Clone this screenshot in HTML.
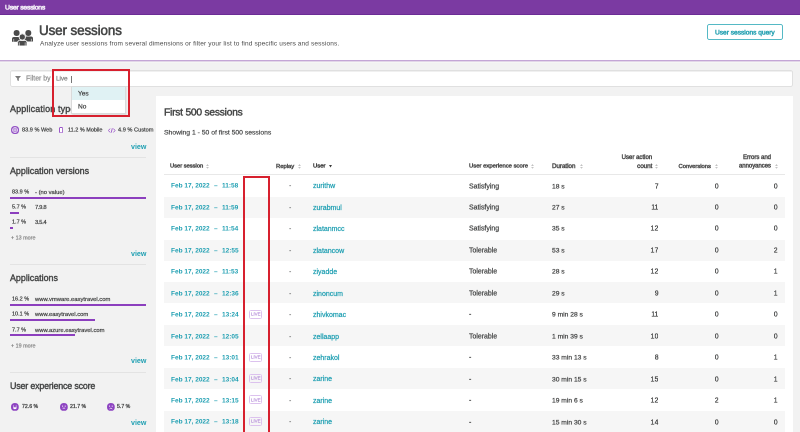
<!DOCTYPE html>
<html><head><meta charset="utf-8">
<style>
*{margin:0;padding:0;box-sizing:border-box}
html,body{width:800px;height:432px;overflow:hidden;background:#f2f2f2;font-family:"Liberation Sans",sans-serif;color:#454646}
.a{position:absolute;white-space:nowrap;line-height:1;will-change:transform}
</style></head><body>
<div class="a" style="left:0;top:0;width:800px;height:15px;background:#7b3aa2"></div>
<div class="a" style="left:0;top:14px;width:800px;height:1px;background:#6b2c95"></div>
<div class="a" style="left:4.90px;top:4.37px;font-size:13.600px;transform:scale(0.5);transform-origin:0 0;color:#f4eef8;letter-spacing:-0.400px;-webkit-text-stroke:1.200px #f4eef8;">User sessions</div>
<div class="a" style="left:0;top:15px;width:800px;height:45px;background:#fff"></div>
<div class="a" style="left:0;top:60px;width:800px;height:1px;background:#c4a6d6"></div>
<div class="a" style="left:0;top:61px;width:800px;height:1px;background:#e2d6e8"></div>
<div class="a" style="left:0;top:62px;width:800px;height:1px;background:#f5f6f4"></div>
<svg class="a" style="left:9px;top:27px" width="28" height="22" viewBox="0 0 28 22">
 <g fill="#4a4a4a">
  <circle cx="7.6" cy="6.1" r="3.0"/><circle cx="19.3" cy="5.9" r="3.0"/>
  <path d="M3 14.8V11.6Q3 9.9 4.7 9.9H10.5Q11.8 9.9 11.8 11.6V14.8Z"/>
  <path d="M15.2 14.5V11.2Q15.2 9.5 16.8 9.5H22.3Q24 9.5 24 11.2V14.5Z"/>
  <circle cx="13.3" cy="10" r="3.2" stroke="#fff" stroke-width="0.9"/>
  <path d="M8.6 19V15.3Q8.6 13.4 10.5 13.4H16.1Q18 13.4 18 15.3V19Z" stroke="#fff" stroke-width="0.9"/>
 </g>
 <g stroke="#fff" stroke-width="0.55"><path d="M4.7 12V14.8M22.4 11.8V14.5M10.4 15.4V19M16.2 15.4V19"/></g>
</svg>
<div class="a" style="left:38.75px;top:24.02px;font-size:26.800px;transform:scale(0.5);transform-origin:0 0;color:#454646;letter-spacing:-0.200px;-webkit-text-stroke:1.120px #454646;">User sessions</div>
<div class="a" style="left:39.75px;top:40.36px;font-size:13.000px;transform:scale(0.5);transform-origin:0 0;color:#4a4a4a;letter-spacing:0.280px;">Analyze user sessions from several dimensions or filter your list to find specific users and sessions.</div>
<div class="a" style="left:707px;top:24px;width:76px;height:16px;border:1px solid #55b9c5;border-radius:2px"></div>
<div class="a" style="left:715.20px;top:28.56px;font-size:13.200px;transform:scale(0.5);transform-origin:0 0;color:#2aa3b3;-webkit-text-stroke:1.000px #2aa3b3;">User sessions query</div>
<div class="a" style="left:10px;top:70px;width:782.5px;height:17px;background:#fff;border:1px solid #e0e0e0;border-radius:2px;box-shadow:inset 0 1px 0 #f0f0f0"></div>
<svg class="a" style="left:14.8px;top:75.9px" width="6" height="5" viewBox="0 0 6 5"><path d="M0 0H6L3.8 2.4V5L2.2 4.2V2.4Z" fill="#7a7a7a"/></svg>
<div class="a" style="left:26.00px;top:74.97px;font-size:13.800px;transform:scale(0.5);transform-origin:0 0;color:#909090;-webkit-text-stroke:0.480px #909090;">Filter by</div>
<div class="a" style="left:55.50px;top:74.96px;font-size:13.000px;transform:scale(0.5);transform-origin:0 0;color:#858585;letter-spacing:-0.200px;-webkit-text-stroke:0.480px #858585;">Live</div>
<div class="a" style="left:71px;top:75.7px;width:0.8px;height:7px;background:#777"></div>
<div class="a" style="left:10.40px;top:105.18px;font-size:17.900px;transform:scale(0.5);transform-origin:0 0;color:#454646;letter-spacing:0.300px;-webkit-text-stroke:0.800px #454646;">Application types</div>
<svg class="a" style="left:11px;top:126.1px" width="8.1" height="8.1" viewBox="0 0 8 8"><circle cx="4" cy="4" r="4" fill="#9250c4"/><g stroke="#fff" stroke-width="0.7" fill="none"><circle cx="4" cy="4" r="2.5"/><path d="M4 1.5V6.5M1.5 4H6.5"/></g></svg>
<div class="a" style="left:21.90px;top:127.23px;font-size:11.200px;transform:scale(0.5);transform-origin:0 0;color:#454646;-webkit-text-stroke:0.480px #454646;">83.9 % Web</div>
<svg class="a" style="left:59px;top:126.9px" width="4.2" height="6.4" viewBox="0 0 4.2 6.4"><rect x="0.5" y="0.5" width="3.2" height="5.4" rx="0.5" fill="#fff" stroke="#9a55c8" stroke-width="1"/></svg>
<div class="a" style="left:68.00px;top:127.23px;font-size:11.000px;transform:scale(0.5);transform-origin:0 0;color:#454646;-webkit-text-stroke:0.480px #454646;">11.2 % Mobile</div>
<svg class="a" style="left:107.6px;top:127.5px" width="7.5" height="5" viewBox="0 0 7.5 5"><g stroke="#9a55c8" stroke-width="0.9" fill="none"><path d="M2 0.6L0.5 2.5L2 4.4M5.5 0.6L7 2.5L5.5 4.4M4.3 0.3L3.2 4.7"/></g></svg>
<div class="a" style="left:118.40px;top:127.23px;font-size:11.300px;transform:scale(0.5);transform-origin:0 0;color:#454646;-webkit-text-stroke:0.480px #454646;">4.9 % Custom</div>
<div class="a" style="left:130.80px;top:142.50px;font-size:14.200px;transform:scale(0.5);transform-origin:0 0;color:#1f9fb2;font-weight:bold;">view</div>
<div class="a" style="left:10px;top:157.2px;width:136.4px;height:1px;background:#e3e3e3"></div>
<div class="a" style="left:10.40px;top:167.19px;font-size:17.800px;transform:scale(0.5);transform-origin:0 0;color:#454646;-webkit-text-stroke:0.800px #454646;">Application versions</div>
<div class="a" style="left:11.90px;top:189.28px;font-size:11.000px;transform:scale(0.5);transform-origin:0 0;color:#454646;-webkit-text-stroke:0.480px #454646;">83.9 %</div>
<div class="a" style="left:34.60px;top:189.05px;font-size:11.700px;transform:scale(0.5);transform-origin:0 0;color:#454646;-webkit-text-stroke:0.480px #454646;">- (no value)</div>
<div class="a" style="left:10px;top:196.6px;width:136.4px;height:1.9px;background:#8c3fbe"></div>
<div class="a" style="left:11.90px;top:204.28px;font-size:11.000px;transform:scale(0.5);transform-origin:0 0;color:#454646;-webkit-text-stroke:0.480px #454646;">5.7 %</div>
<div class="a" style="left:34.60px;top:204.05px;font-size:11.700px;transform:scale(0.5);transform-origin:0 0;color:#454646;letter-spacing:-0.700px;-webkit-text-stroke:0.480px #454646;">7.9.8</div>
<div class="a" style="left:10px;top:211.9px;width:9.4px;height:1.9px;background:#8c3fbe"></div>
<div class="a" style="left:11.90px;top:219.48px;font-size:11.000px;transform:scale(0.5);transform-origin:0 0;color:#454646;-webkit-text-stroke:0.480px #454646;">1.7 %</div>
<div class="a" style="left:34.60px;top:219.25px;font-size:11.700px;transform:scale(0.5);transform-origin:0 0;color:#454646;letter-spacing:-0.700px;-webkit-text-stroke:0.480px #454646;">3.5.4</div>
<div class="a" style="left:10px;top:226.9px;width:3.1px;height:1.9px;background:#8c3fbe"></div>
<div class="a" style="left:11.00px;top:234.98px;font-size:10.800px;transform:scale(0.5);transform-origin:0 0;color:#808080;-webkit-text-stroke:0.400px #808080;">+ 13 more</div>
<div class="a" style="left:130.80px;top:249.50px;font-size:14.200px;transform:scale(0.5);transform-origin:0 0;color:#1f9fb2;font-weight:bold;">view</div>
<div class="a" style="left:10px;top:264.4px;width:136.4px;height:1px;background:#e3e3e3"></div>
<div class="a" style="left:10.40px;top:274.19px;font-size:17.800px;transform:scale(0.5);transform-origin:0 0;color:#454646;-webkit-text-stroke:0.800px #454646;">Applications</div>
<div class="a" style="left:11.90px;top:296.18px;font-size:11.000px;transform:scale(0.5);transform-origin:0 0;color:#454646;-webkit-text-stroke:0.480px #454646;">16.2 %</div>
<div class="a" style="left:34.60px;top:295.95px;font-size:11.700px;transform:scale(0.5);transform-origin:0 0;color:#454646;-webkit-text-stroke:0.480px #454646;">www.vmware.easytravel.com</div>
<div class="a" style="left:10px;top:303.5px;width:136.4px;height:1.9px;background:#8c3fbe"></div>
<div class="a" style="left:11.90px;top:311.38px;font-size:11.000px;transform:scale(0.5);transform-origin:0 0;color:#454646;-webkit-text-stroke:0.480px #454646;">10.1 %</div>
<div class="a" style="left:34.60px;top:311.15px;font-size:11.700px;transform:scale(0.5);transform-origin:0 0;color:#454646;-webkit-text-stroke:0.480px #454646;">www.easytravel.com</div>
<div class="a" style="left:10px;top:319.2px;width:84.7px;height:1.9px;background:#8c3fbe"></div>
<div class="a" style="left:11.90px;top:326.98px;font-size:11.000px;transform:scale(0.5);transform-origin:0 0;color:#454646;-webkit-text-stroke:0.480px #454646;">7.7 %</div>
<div class="a" style="left:34.60px;top:326.75px;font-size:11.700px;transform:scale(0.5);transform-origin:0 0;color:#454646;-webkit-text-stroke:0.480px #454646;">www.azure.easytravel.com</div>
<div class="a" style="left:10px;top:334px;width:65px;height:1.9px;background:#8c3fbe"></div>
<div class="a" style="left:11.00px;top:342.98px;font-size:10.800px;transform:scale(0.5);transform-origin:0 0;color:#808080;-webkit-text-stroke:0.400px #808080;">+ 19 more</div>
<div class="a" style="left:130.80px;top:357.00px;font-size:14.200px;transform:scale(0.5);transform-origin:0 0;color:#1f9fb2;font-weight:bold;">view</div>
<div class="a" style="left:10px;top:372.4px;width:136.4px;height:1px;background:#e3e3e3"></div>
<div class="a" style="left:10.40px;top:381.79px;font-size:17.800px;transform:scale(0.5);transform-origin:0 0;color:#454646;letter-spacing:-0.360px;-webkit-text-stroke:0.800px #454646;">User experience score</div>
<svg class="a" style="left:11.4px;top:402.8px" width="7.8" height="7.8" viewBox="0 0 7.8 7.8"><circle cx="3.9" cy="3.9" r="3.9" fill="#8e44c2"/><circle cx="2.6" cy="3" r="0.6" fill="#fff"/><circle cx="5.2" cy="3" r="0.6" fill="#fff"/><path d="M2 4.2H5.8Q5.8 6.3 3.9 6.3Q2 6.3 2 4.2Z" fill="#fff"/></svg>
<div class="a" style="left:22.00px;top:404.24px;font-size:10.400px;transform:scale(0.5);transform-origin:0 0;color:#454646;-webkit-text-stroke:0.600px #454646;">72.6 %</div>
<svg class="a" style="left:59.7px;top:402.8px" width="7.8" height="7.8" viewBox="0 0 7.8 7.8"><circle cx="3.9" cy="3.9" r="3.9" fill="#8e44c2"/><circle cx="2.6" cy="3.1" r="0.6" fill="#fff"/><circle cx="5.2" cy="3.1" r="0.6" fill="#fff"/><path d="M2.6 5.2H5.2" stroke="#fff" stroke-width="0.7"/></svg>
<div class="a" style="left:70.00px;top:404.24px;font-size:10.400px;transform:scale(0.5);transform-origin:0 0;color:#454646;-webkit-text-stroke:0.600px #454646;">21.7 %</div>
<svg class="a" style="left:106.6px;top:402.8px" width="7.8" height="7.8" viewBox="0 0 7.8 7.8"><circle cx="3.9" cy="3.9" r="3.9" fill="#8e44c2"/><circle cx="2.6" cy="3.1" r="0.6" fill="#fff"/><circle cx="5.2" cy="3.1" r="0.6" fill="#fff"/><path d="M2.5 5.9Q3.9 4.4 5.3 5.9" stroke="#fff" stroke-width="0.7" fill="none"/></svg>
<div class="a" style="left:116.80px;top:404.24px;font-size:10.400px;transform:scale(0.5);transform-origin:0 0;color:#454646;-webkit-text-stroke:0.600px #454646;">5.7 %</div>
<div class="a" style="left:130.80px;top:418.80px;font-size:14.200px;transform:scale(0.5);transform-origin:0 0;color:#1f9fb2;font-weight:bold;">view</div>
<div class="a" style="left:155.8px;top:96.2px;width:636.8px;height:340px;background:#fff"></div>
<div class="a" style="left:164.20px;top:106.96px;font-size:20.400px;transform:scale(0.5);transform-origin:0 0;color:#454646;letter-spacing:-0.400px;-webkit-text-stroke:0.880px #454646;">First 500 sessions</div>
<div class="a" style="left:164.20px;top:129.27px;font-size:13.600px;transform:scale(0.5);transform-origin:0 0;color:#454646;-webkit-text-stroke:0.400px #454646;">Showing 1 - 50 of first 500 sessions</div>
<div class="a" style="left:170.00px;top:163.48px;font-size:11.500px;transform:scale(0.5);transform-origin:0 0;color:#4f4f4f;-webkit-text-stroke:0.960px #4f4f4f;">User session</div>
<svg class="a" style="left:206.2px;top:163.7px" width="3" height="4.8" viewBox="0 0 3 4.8"><path d="M1.5 0L2.9 1.9H0.1Z M1.5 4.8L2.9 2.9H0.1Z" fill="#c2c2c2"/></svg>
<div class="a" style="left:276.20px;top:163.25px;font-size:11.700px;transform:scale(0.5);transform-origin:0 0;color:#4f4f4f;-webkit-text-stroke:0.960px #4f4f4f;">Replay</div>
<svg class="a" style="left:298.3px;top:163.7px" width="3" height="4.8" viewBox="0 0 3 4.8"><path d="M1.5 0L2.9 1.9H0.1Z M1.5 4.8L2.9 2.9H0.1Z" fill="#c2c2c2"/></svg>
<div class="a" style="left:313.00px;top:163.47px;font-size:11.800px;transform:scale(0.5);transform-origin:0 0;color:#3a3a3a;-webkit-text-stroke:0.880px #3a3a3a;">User</div>
<svg class="a" style="left:329.4px;top:164.6px" width="3" height="2.6" viewBox="0 0 3 2.6"><path d="M0 0H3L1.5 2.4Z" fill="#3a3a3a"/></svg>
<div class="a" style="left:468.75px;top:163.47px;font-size:11.800px;transform:scale(0.5);transform-origin:0 0;color:#4f4f4f;-webkit-text-stroke:0.960px #4f4f4f;">User experience score</div>
<svg class="a" style="left:530.9px;top:163.7px" width="3" height="4.8" viewBox="0 0 3 4.8"><path d="M1.5 0L2.9 1.9H0.1Z M1.5 4.8L2.9 2.9H0.1Z" fill="#c2c2c2"/></svg>
<div class="a" style="left:552.20px;top:163.21px;font-size:12.400px;transform:scale(0.5);transform-origin:0 0;color:#4f4f4f;-webkit-text-stroke:0.960px #4f4f4f;">Duration</div>
<svg class="a" style="left:579.9px;top:163.7px" width="3" height="4.8" viewBox="0 0 3 4.8"><path d="M1.5 0L2.9 1.9H0.1Z M1.5 4.8L2.9 2.9H0.1Z" fill="#c2c2c2"/></svg>
<div class="a" style="right:148.00px;top:153.73px;font-size:12.100px;transform:scale(0.5);transform-origin:100% 0;color:#4f4f4f;-webkit-text-stroke:0.960px #4f4f4f;">User action</div>
<div class="a" style="right:148.10px;top:163.21px;font-size:12.400px;transform:scale(0.5);transform-origin:100% 0;color:#4f4f4f;-webkit-text-stroke:0.960px #4f4f4f;">count</div>
<svg class="a" style="left:655.3px;top:163.7px" width="3" height="4.8" viewBox="0 0 3 4.8"><path d="M1.5 0L2.9 1.9H0.1Z M1.5 4.8L2.9 2.9H0.1Z" fill="#c2c2c2"/></svg>
<div class="a" style="right:88.70px;top:163.25px;font-size:11.700px;transform:scale(0.5);transform-origin:100% 0;color:#4f4f4f;-webkit-text-stroke:0.960px #4f4f4f;">Conversions</div>
<svg class="a" style="left:714.6px;top:163.7px" width="3" height="4.8" viewBox="0 0 3 4.8"><path d="M1.5 0L2.9 1.9H0.1Z M1.5 4.8L2.9 2.9H0.1Z" fill="#c2c2c2"/></svg>
<div class="a" style="right:28.70px;top:153.73px;font-size:12.000px;transform:scale(0.5);transform-origin:100% 0;color:#4f4f4f;-webkit-text-stroke:0.960px #4f4f4f;">Errors and</div>
<div class="a" style="right:28.70px;top:163.47px;font-size:11.860px;transform:scale(0.5);transform-origin:100% 0;color:#4f4f4f;-webkit-text-stroke:0.960px #4f4f4f;">annoyances</div>
<svg class="a" style="left:774.6px;top:163.7px" width="3" height="4.8" viewBox="0 0 3 4.8"><path d="M1.5 0L2.9 1.9H0.1Z M1.5 4.8L2.9 2.9H0.1Z" fill="#c2c2c2"/></svg>
<div class="a" style="left:164px;top:174px;width:621px;height:1px;background:#e8e8e8"></div>
<div class="a" style="left:170.80px;top:182.48px;font-size:13.000px;transform:scale(0.5);transform-origin:0 0;color:#1f9fb2;font-weight:bold;">Feb 17, 2022</div>
<div class="a" style="left:213.60px;top:182.48px;font-size:13.000px;transform:scale(0.5);transform-origin:0 0;color:#1f9fb2;font-weight:bold;">–</div>
<div class="a" style="left:221.50px;top:182.48px;font-size:13.000px;transform:scale(0.5);transform-origin:0 0;color:#1f9fb2;font-weight:bold;">11:58</div>
<div class="a" style="left:288.70px;top:182.39px;font-size:14.000px;transform:scale(0.5);transform-origin:0 0;color:#454646;">-</div>
<div class="a" style="left:313.40px;top:182.39px;font-size:14.000px;transform:scale(0.5);transform-origin:0 0;color:#1f9fb2;-webkit-text-stroke:0.480px #1f9fb2;">zurithw</div>
<div class="a" style="left:468.75px;top:182.57px;font-size:13.880px;transform:scale(0.5);transform-origin:0 0;color:#454646;-webkit-text-stroke:0.480px #454646;">Satisfying</div>
<div class="a" style="left:552.20px;top:182.57px;font-size:13.400px;transform:scale(0.5);transform-origin:0 0;color:#454646;-webkit-text-stroke:0.480px #454646;">18 s</div>
<div class="a" style="right:141.20px;top:182.57px;font-size:13.800px;transform:scale(0.5);transform-origin:100% 0;color:#454646;-webkit-text-stroke:0.480px #454646;">7</div>
<div class="a" style="right:81.80px;top:182.57px;font-size:13.800px;transform:scale(0.5);transform-origin:100% 0;color:#454646;-webkit-text-stroke:0.480px #454646;">0</div>
<div class="a" style="right:22.20px;top:182.57px;font-size:13.800px;transform:scale(0.5);transform-origin:100% 0;color:#454646;-webkit-text-stroke:0.480px #454646;">0</div>
<div class="a" style="left:164px;top:196.65px;width:620.8px;height:21.1px;background:#f6f6f6"></div>
<div class="a" style="left:170.80px;top:203.93px;font-size:13.000px;transform:scale(0.5);transform-origin:0 0;color:#1f9fb2;font-weight:bold;">Feb 17, 2022</div>
<div class="a" style="left:213.60px;top:203.93px;font-size:13.000px;transform:scale(0.5);transform-origin:0 0;color:#1f9fb2;font-weight:bold;">–</div>
<div class="a" style="left:221.50px;top:203.93px;font-size:13.000px;transform:scale(0.5);transform-origin:0 0;color:#1f9fb2;font-weight:bold;">11:59</div>
<div class="a" style="left:288.70px;top:203.84px;font-size:14.000px;transform:scale(0.5);transform-origin:0 0;color:#454646;">-</div>
<div class="a" style="left:313.40px;top:203.84px;font-size:14.000px;transform:scale(0.5);transform-origin:0 0;color:#1f9fb2;-webkit-text-stroke:0.480px #1f9fb2;">zurabmul</div>
<div class="a" style="left:468.75px;top:204.02px;font-size:13.880px;transform:scale(0.5);transform-origin:0 0;color:#454646;-webkit-text-stroke:0.480px #454646;">Satisfying</div>
<div class="a" style="left:552.20px;top:204.02px;font-size:13.400px;transform:scale(0.5);transform-origin:0 0;color:#454646;-webkit-text-stroke:0.480px #454646;">27 s</div>
<div class="a" style="right:141.20px;top:204.02px;font-size:13.800px;transform:scale(0.5);transform-origin:100% 0;color:#454646;-webkit-text-stroke:0.480px #454646;">11</div>
<div class="a" style="right:81.80px;top:204.02px;font-size:13.800px;transform:scale(0.5);transform-origin:100% 0;color:#454646;-webkit-text-stroke:0.480px #454646;">0</div>
<div class="a" style="right:22.20px;top:204.02px;font-size:13.800px;transform:scale(0.5);transform-origin:100% 0;color:#454646;-webkit-text-stroke:0.480px #454646;">0</div>
<div class="a" style="left:170.80px;top:225.38px;font-size:13.000px;transform:scale(0.5);transform-origin:0 0;color:#1f9fb2;font-weight:bold;">Feb 17, 2022</div>
<div class="a" style="left:213.60px;top:225.38px;font-size:13.000px;transform:scale(0.5);transform-origin:0 0;color:#1f9fb2;font-weight:bold;">–</div>
<div class="a" style="left:221.50px;top:225.38px;font-size:13.000px;transform:scale(0.5);transform-origin:0 0;color:#1f9fb2;font-weight:bold;">11:54</div>
<div class="a" style="left:288.70px;top:225.29px;font-size:14.000px;transform:scale(0.5);transform-origin:0 0;color:#454646;">-</div>
<div class="a" style="left:313.40px;top:225.29px;font-size:14.000px;transform:scale(0.5);transform-origin:0 0;color:#1f9fb2;-webkit-text-stroke:0.480px #1f9fb2;">zlatanmcc</div>
<div class="a" style="left:468.75px;top:225.47px;font-size:13.880px;transform:scale(0.5);transform-origin:0 0;color:#454646;-webkit-text-stroke:0.480px #454646;">Satisfying</div>
<div class="a" style="left:552.20px;top:225.47px;font-size:13.400px;transform:scale(0.5);transform-origin:0 0;color:#454646;-webkit-text-stroke:0.480px #454646;">35 s</div>
<div class="a" style="right:141.20px;top:225.47px;font-size:13.800px;transform:scale(0.5);transform-origin:100% 0;color:#454646;-webkit-text-stroke:0.480px #454646;">12</div>
<div class="a" style="right:81.80px;top:225.47px;font-size:13.800px;transform:scale(0.5);transform-origin:100% 0;color:#454646;-webkit-text-stroke:0.480px #454646;">0</div>
<div class="a" style="right:22.20px;top:225.47px;font-size:13.800px;transform:scale(0.5);transform-origin:100% 0;color:#454646;-webkit-text-stroke:0.480px #454646;">0</div>
<div class="a" style="left:164px;top:239.55px;width:620.8px;height:21.1px;background:#f6f6f6"></div>
<div class="a" style="left:170.80px;top:246.83px;font-size:13.000px;transform:scale(0.5);transform-origin:0 0;color:#1f9fb2;font-weight:bold;">Feb 17, 2022</div>
<div class="a" style="left:213.60px;top:246.83px;font-size:13.000px;transform:scale(0.5);transform-origin:0 0;color:#1f9fb2;font-weight:bold;">–</div>
<div class="a" style="left:221.50px;top:246.83px;font-size:13.000px;transform:scale(0.5);transform-origin:0 0;color:#1f9fb2;font-weight:bold;">12:55</div>
<div class="a" style="left:288.70px;top:246.74px;font-size:14.000px;transform:scale(0.5);transform-origin:0 0;color:#454646;">-</div>
<div class="a" style="left:313.40px;top:246.74px;font-size:14.000px;transform:scale(0.5);transform-origin:0 0;color:#1f9fb2;-webkit-text-stroke:0.480px #1f9fb2;">zlatancow</div>
<div class="a" style="left:468.75px;top:246.92px;font-size:13.880px;transform:scale(0.5);transform-origin:0 0;color:#454646;-webkit-text-stroke:0.480px #454646;">Tolerable</div>
<div class="a" style="left:552.20px;top:246.92px;font-size:13.400px;transform:scale(0.5);transform-origin:0 0;color:#454646;-webkit-text-stroke:0.480px #454646;">53 s</div>
<div class="a" style="right:141.20px;top:246.92px;font-size:13.800px;transform:scale(0.5);transform-origin:100% 0;color:#454646;-webkit-text-stroke:0.480px #454646;">17</div>
<div class="a" style="right:81.80px;top:246.92px;font-size:13.800px;transform:scale(0.5);transform-origin:100% 0;color:#454646;-webkit-text-stroke:0.480px #454646;">0</div>
<div class="a" style="right:22.20px;top:246.92px;font-size:13.800px;transform:scale(0.5);transform-origin:100% 0;color:#454646;-webkit-text-stroke:0.480px #454646;">2</div>
<div class="a" style="left:170.80px;top:268.28px;font-size:13.000px;transform:scale(0.5);transform-origin:0 0;color:#1f9fb2;font-weight:bold;">Feb 17, 2022</div>
<div class="a" style="left:213.60px;top:268.28px;font-size:13.000px;transform:scale(0.5);transform-origin:0 0;color:#1f9fb2;font-weight:bold;">–</div>
<div class="a" style="left:221.50px;top:268.28px;font-size:13.000px;transform:scale(0.5);transform-origin:0 0;color:#1f9fb2;font-weight:bold;">11:53</div>
<div class="a" style="left:288.70px;top:268.19px;font-size:14.000px;transform:scale(0.5);transform-origin:0 0;color:#454646;">-</div>
<div class="a" style="left:313.40px;top:268.19px;font-size:14.000px;transform:scale(0.5);transform-origin:0 0;color:#1f9fb2;-webkit-text-stroke:0.480px #1f9fb2;">ziyadde</div>
<div class="a" style="left:468.75px;top:268.37px;font-size:13.880px;transform:scale(0.5);transform-origin:0 0;color:#454646;-webkit-text-stroke:0.480px #454646;">Tolerable</div>
<div class="a" style="left:552.20px;top:268.37px;font-size:13.400px;transform:scale(0.5);transform-origin:0 0;color:#454646;-webkit-text-stroke:0.480px #454646;">28 s</div>
<div class="a" style="right:141.20px;top:268.37px;font-size:13.800px;transform:scale(0.5);transform-origin:100% 0;color:#454646;-webkit-text-stroke:0.480px #454646;">12</div>
<div class="a" style="right:81.80px;top:268.37px;font-size:13.800px;transform:scale(0.5);transform-origin:100% 0;color:#454646;-webkit-text-stroke:0.480px #454646;">0</div>
<div class="a" style="right:22.20px;top:268.37px;font-size:13.800px;transform:scale(0.5);transform-origin:100% 0;color:#454646;-webkit-text-stroke:0.480px #454646;">1</div>
<div class="a" style="left:164px;top:282.45px;width:620.8px;height:21.1px;background:#f6f6f6"></div>
<div class="a" style="left:170.80px;top:289.73px;font-size:13.000px;transform:scale(0.5);transform-origin:0 0;color:#1f9fb2;font-weight:bold;">Feb 17, 2022</div>
<div class="a" style="left:213.60px;top:289.73px;font-size:13.000px;transform:scale(0.5);transform-origin:0 0;color:#1f9fb2;font-weight:bold;">–</div>
<div class="a" style="left:221.50px;top:289.73px;font-size:13.000px;transform:scale(0.5);transform-origin:0 0;color:#1f9fb2;font-weight:bold;">12:36</div>
<div class="a" style="left:288.70px;top:289.64px;font-size:14.000px;transform:scale(0.5);transform-origin:0 0;color:#454646;">-</div>
<div class="a" style="left:313.40px;top:289.64px;font-size:14.000px;transform:scale(0.5);transform-origin:0 0;color:#1f9fb2;-webkit-text-stroke:0.480px #1f9fb2;">zinoncum</div>
<div class="a" style="left:468.75px;top:289.82px;font-size:13.880px;transform:scale(0.5);transform-origin:0 0;color:#454646;-webkit-text-stroke:0.480px #454646;">Tolerable</div>
<div class="a" style="left:552.20px;top:289.82px;font-size:13.400px;transform:scale(0.5);transform-origin:0 0;color:#454646;-webkit-text-stroke:0.480px #454646;">29 s</div>
<div class="a" style="right:141.20px;top:289.82px;font-size:13.800px;transform:scale(0.5);transform-origin:100% 0;color:#454646;-webkit-text-stroke:0.480px #454646;">9</div>
<div class="a" style="right:81.80px;top:289.82px;font-size:13.800px;transform:scale(0.5);transform-origin:100% 0;color:#454646;-webkit-text-stroke:0.480px #454646;">0</div>
<div class="a" style="right:22.20px;top:289.82px;font-size:13.800px;transform:scale(0.5);transform-origin:100% 0;color:#454646;-webkit-text-stroke:0.480px #454646;">1</div>
<div class="a" style="left:170.80px;top:311.18px;font-size:13.000px;transform:scale(0.5);transform-origin:0 0;color:#1f9fb2;font-weight:bold;">Feb 17, 2022</div>
<div class="a" style="left:213.60px;top:311.18px;font-size:13.000px;transform:scale(0.5);transform-origin:0 0;color:#1f9fb2;font-weight:bold;">–</div>
<div class="a" style="left:221.50px;top:311.18px;font-size:13.000px;transform:scale(0.5);transform-origin:0 0;color:#1f9fb2;font-weight:bold;">13:24</div>
<div class="a" style="left:249.2px;top:309.60px;width:13.2px;height:9px;border:0.8px solid #dcc2ee;border-radius:1.5px"></div>
<div class="a" style="left:251.30px;top:312.10px;font-size:8.800px;transform:scale(0.5);transform-origin:0 0;color:#b48ad8;-webkit-text-stroke:0.320px #b48ad8;">LIVE</div>
<div class="a" style="left:288.70px;top:311.09px;font-size:14.000px;transform:scale(0.5);transform-origin:0 0;color:#454646;">-</div>
<div class="a" style="left:313.40px;top:311.09px;font-size:14.000px;transform:scale(0.5);transform-origin:0 0;color:#1f9fb2;-webkit-text-stroke:0.480px #1f9fb2;">zhivkomac</div>
<div class="a" style="left:468.75px;top:311.27px;font-size:13.880px;transform:scale(0.5);transform-origin:0 0;color:#454646;-webkit-text-stroke:0.480px #454646;">-</div>
<div class="a" style="left:552.20px;top:311.27px;font-size:13.400px;transform:scale(0.5);transform-origin:0 0;color:#454646;-webkit-text-stroke:0.480px #454646;">9 min 28 s</div>
<div class="a" style="right:141.20px;top:311.27px;font-size:13.800px;transform:scale(0.5);transform-origin:100% 0;color:#454646;-webkit-text-stroke:0.480px #454646;">11</div>
<div class="a" style="right:81.80px;top:311.27px;font-size:13.800px;transform:scale(0.5);transform-origin:100% 0;color:#454646;-webkit-text-stroke:0.480px #454646;">0</div>
<div class="a" style="right:22.20px;top:311.27px;font-size:13.800px;transform:scale(0.5);transform-origin:100% 0;color:#454646;-webkit-text-stroke:0.480px #454646;">0</div>
<div class="a" style="left:164px;top:325.35px;width:620.8px;height:21.1px;background:#f6f6f6"></div>
<div class="a" style="left:170.80px;top:332.63px;font-size:13.000px;transform:scale(0.5);transform-origin:0 0;color:#1f9fb2;font-weight:bold;">Feb 17, 2022</div>
<div class="a" style="left:213.60px;top:332.63px;font-size:13.000px;transform:scale(0.5);transform-origin:0 0;color:#1f9fb2;font-weight:bold;">–</div>
<div class="a" style="left:221.50px;top:332.63px;font-size:13.000px;transform:scale(0.5);transform-origin:0 0;color:#1f9fb2;font-weight:bold;">12:05</div>
<div class="a" style="left:288.70px;top:332.54px;font-size:14.000px;transform:scale(0.5);transform-origin:0 0;color:#454646;">-</div>
<div class="a" style="left:313.40px;top:332.54px;font-size:14.000px;transform:scale(0.5);transform-origin:0 0;color:#1f9fb2;-webkit-text-stroke:0.480px #1f9fb2;">zellaapp</div>
<div class="a" style="left:468.75px;top:332.72px;font-size:13.880px;transform:scale(0.5);transform-origin:0 0;color:#454646;-webkit-text-stroke:0.480px #454646;">Tolerable</div>
<div class="a" style="left:552.20px;top:332.72px;font-size:13.400px;transform:scale(0.5);transform-origin:0 0;color:#454646;-webkit-text-stroke:0.480px #454646;">1 min 39 s</div>
<div class="a" style="right:141.20px;top:332.72px;font-size:13.800px;transform:scale(0.5);transform-origin:100% 0;color:#454646;-webkit-text-stroke:0.480px #454646;">10</div>
<div class="a" style="right:81.80px;top:332.72px;font-size:13.800px;transform:scale(0.5);transform-origin:100% 0;color:#454646;-webkit-text-stroke:0.480px #454646;">0</div>
<div class="a" style="right:22.20px;top:332.72px;font-size:13.800px;transform:scale(0.5);transform-origin:100% 0;color:#454646;-webkit-text-stroke:0.480px #454646;">0</div>
<div class="a" style="left:170.80px;top:354.08px;font-size:13.000px;transform:scale(0.5);transform-origin:0 0;color:#1f9fb2;font-weight:bold;">Feb 17, 2022</div>
<div class="a" style="left:213.60px;top:354.08px;font-size:13.000px;transform:scale(0.5);transform-origin:0 0;color:#1f9fb2;font-weight:bold;">–</div>
<div class="a" style="left:221.50px;top:354.08px;font-size:13.000px;transform:scale(0.5);transform-origin:0 0;color:#1f9fb2;font-weight:bold;">13:01</div>
<div class="a" style="left:249.2px;top:352.50px;width:13.2px;height:9px;border:0.8px solid #dcc2ee;border-radius:1.5px"></div>
<div class="a" style="left:251.30px;top:355.00px;font-size:8.800px;transform:scale(0.5);transform-origin:0 0;color:#b48ad8;-webkit-text-stroke:0.320px #b48ad8;">LIVE</div>
<div class="a" style="left:288.70px;top:353.99px;font-size:14.000px;transform:scale(0.5);transform-origin:0 0;color:#454646;">-</div>
<div class="a" style="left:313.40px;top:353.99px;font-size:14.000px;transform:scale(0.5);transform-origin:0 0;color:#1f9fb2;-webkit-text-stroke:0.480px #1f9fb2;">zehrakol</div>
<div class="a" style="left:468.75px;top:354.17px;font-size:13.880px;transform:scale(0.5);transform-origin:0 0;color:#454646;-webkit-text-stroke:0.480px #454646;">-</div>
<div class="a" style="left:552.20px;top:354.17px;font-size:13.400px;transform:scale(0.5);transform-origin:0 0;color:#454646;-webkit-text-stroke:0.480px #454646;">33 min 13 s</div>
<div class="a" style="right:141.20px;top:354.17px;font-size:13.800px;transform:scale(0.5);transform-origin:100% 0;color:#454646;-webkit-text-stroke:0.480px #454646;">8</div>
<div class="a" style="right:81.80px;top:354.17px;font-size:13.800px;transform:scale(0.5);transform-origin:100% 0;color:#454646;-webkit-text-stroke:0.480px #454646;">0</div>
<div class="a" style="right:22.20px;top:354.17px;font-size:13.800px;transform:scale(0.5);transform-origin:100% 0;color:#454646;-webkit-text-stroke:0.480px #454646;">1</div>
<div class="a" style="left:164px;top:368.25px;width:620.8px;height:21.1px;background:#f6f6f6"></div>
<div class="a" style="left:170.80px;top:375.53px;font-size:13.000px;transform:scale(0.5);transform-origin:0 0;color:#1f9fb2;font-weight:bold;">Feb 17, 2022</div>
<div class="a" style="left:213.60px;top:375.53px;font-size:13.000px;transform:scale(0.5);transform-origin:0 0;color:#1f9fb2;font-weight:bold;">–</div>
<div class="a" style="left:221.50px;top:375.53px;font-size:13.000px;transform:scale(0.5);transform-origin:0 0;color:#1f9fb2;font-weight:bold;">13:04</div>
<div class="a" style="left:249.2px;top:373.95px;width:13.2px;height:9px;border:0.8px solid #dcc2ee;border-radius:1.5px"></div>
<div class="a" style="left:251.30px;top:376.45px;font-size:8.800px;transform:scale(0.5);transform-origin:0 0;color:#b48ad8;-webkit-text-stroke:0.320px #b48ad8;">LIVE</div>
<div class="a" style="left:288.70px;top:375.44px;font-size:14.000px;transform:scale(0.5);transform-origin:0 0;color:#454646;">-</div>
<div class="a" style="left:313.40px;top:375.44px;font-size:14.000px;transform:scale(0.5);transform-origin:0 0;color:#1f9fb2;-webkit-text-stroke:0.480px #1f9fb2;">zarine</div>
<div class="a" style="left:468.75px;top:375.62px;font-size:13.880px;transform:scale(0.5);transform-origin:0 0;color:#454646;-webkit-text-stroke:0.480px #454646;">-</div>
<div class="a" style="left:552.20px;top:375.62px;font-size:13.400px;transform:scale(0.5);transform-origin:0 0;color:#454646;-webkit-text-stroke:0.480px #454646;">30 min 15 s</div>
<div class="a" style="right:141.20px;top:375.62px;font-size:13.800px;transform:scale(0.5);transform-origin:100% 0;color:#454646;-webkit-text-stroke:0.480px #454646;">15</div>
<div class="a" style="right:81.80px;top:375.62px;font-size:13.800px;transform:scale(0.5);transform-origin:100% 0;color:#454646;-webkit-text-stroke:0.480px #454646;">0</div>
<div class="a" style="right:22.20px;top:375.62px;font-size:13.800px;transform:scale(0.5);transform-origin:100% 0;color:#454646;-webkit-text-stroke:0.480px #454646;">1</div>
<div class="a" style="left:170.80px;top:396.98px;font-size:13.000px;transform:scale(0.5);transform-origin:0 0;color:#1f9fb2;font-weight:bold;">Feb 17, 2022</div>
<div class="a" style="left:213.60px;top:396.98px;font-size:13.000px;transform:scale(0.5);transform-origin:0 0;color:#1f9fb2;font-weight:bold;">–</div>
<div class="a" style="left:221.50px;top:396.98px;font-size:13.000px;transform:scale(0.5);transform-origin:0 0;color:#1f9fb2;font-weight:bold;">13:15</div>
<div class="a" style="left:249.2px;top:395.40px;width:13.2px;height:9px;border:0.8px solid #dcc2ee;border-radius:1.5px"></div>
<div class="a" style="left:251.30px;top:397.90px;font-size:8.800px;transform:scale(0.5);transform-origin:0 0;color:#b48ad8;-webkit-text-stroke:0.320px #b48ad8;">LIVE</div>
<div class="a" style="left:288.70px;top:396.89px;font-size:14.000px;transform:scale(0.5);transform-origin:0 0;color:#454646;">-</div>
<div class="a" style="left:313.40px;top:396.89px;font-size:14.000px;transform:scale(0.5);transform-origin:0 0;color:#1f9fb2;-webkit-text-stroke:0.480px #1f9fb2;">zarine</div>
<div class="a" style="left:468.75px;top:397.07px;font-size:13.880px;transform:scale(0.5);transform-origin:0 0;color:#454646;-webkit-text-stroke:0.480px #454646;">-</div>
<div class="a" style="left:552.20px;top:397.07px;font-size:13.400px;transform:scale(0.5);transform-origin:0 0;color:#454646;-webkit-text-stroke:0.480px #454646;">19 min 6 s</div>
<div class="a" style="right:141.20px;top:397.07px;font-size:13.800px;transform:scale(0.5);transform-origin:100% 0;color:#454646;-webkit-text-stroke:0.480px #454646;">12</div>
<div class="a" style="right:81.80px;top:397.07px;font-size:13.800px;transform:scale(0.5);transform-origin:100% 0;color:#454646;-webkit-text-stroke:0.480px #454646;">2</div>
<div class="a" style="right:22.20px;top:397.07px;font-size:13.800px;transform:scale(0.5);transform-origin:100% 0;color:#454646;-webkit-text-stroke:0.480px #454646;">1</div>
<div class="a" style="left:164px;top:411.15px;width:620.8px;height:21.1px;background:#f6f6f6"></div>
<div class="a" style="left:170.80px;top:418.43px;font-size:13.000px;transform:scale(0.5);transform-origin:0 0;color:#1f9fb2;font-weight:bold;">Feb 17, 2022</div>
<div class="a" style="left:213.60px;top:418.43px;font-size:13.000px;transform:scale(0.5);transform-origin:0 0;color:#1f9fb2;font-weight:bold;">–</div>
<div class="a" style="left:221.50px;top:418.43px;font-size:13.000px;transform:scale(0.5);transform-origin:0 0;color:#1f9fb2;font-weight:bold;">13:18</div>
<div class="a" style="left:249.2px;top:416.85px;width:13.2px;height:9px;border:0.8px solid #dcc2ee;border-radius:1.5px"></div>
<div class="a" style="left:251.30px;top:419.35px;font-size:8.800px;transform:scale(0.5);transform-origin:0 0;color:#b48ad8;-webkit-text-stroke:0.320px #b48ad8;">LIVE</div>
<div class="a" style="left:288.70px;top:418.34px;font-size:14.000px;transform:scale(0.5);transform-origin:0 0;color:#454646;">-</div>
<div class="a" style="left:313.40px;top:418.34px;font-size:14.000px;transform:scale(0.5);transform-origin:0 0;color:#1f9fb2;-webkit-text-stroke:0.480px #1f9fb2;">zarine</div>
<div class="a" style="left:468.75px;top:418.52px;font-size:13.880px;transform:scale(0.5);transform-origin:0 0;color:#454646;-webkit-text-stroke:0.480px #454646;">-</div>
<div class="a" style="left:552.20px;top:418.52px;font-size:13.400px;transform:scale(0.5);transform-origin:0 0;color:#454646;-webkit-text-stroke:0.480px #454646;">15 min 30 s</div>
<div class="a" style="right:141.20px;top:418.52px;font-size:13.800px;transform:scale(0.5);transform-origin:100% 0;color:#454646;-webkit-text-stroke:0.480px #454646;">14</div>
<div class="a" style="right:81.80px;top:418.52px;font-size:13.800px;transform:scale(0.5);transform-origin:100% 0;color:#454646;-webkit-text-stroke:0.480px #454646;">0</div>
<div class="a" style="right:22.20px;top:418.52px;font-size:13.800px;transform:scale(0.5);transform-origin:100% 0;color:#454646;-webkit-text-stroke:0.480px #454646;">0</div>
<div class="a" style="left:71.25px;top:86.2px;width:55.4px;height:28.2px;background:#fff;border:1px solid #dadada;box-shadow:0.5px 1px 1.5px rgba(0,0,0,0.12)"></div>
<div class="a" style="left:72.25px;top:87.2px;width:53.4px;height:12.6px;background:#e0f2f4"></div>
<div class="a" style="left:77.80px;top:89.56px;font-size:13.000px;transform:scale(0.5);transform-origin:0 0;color:#454646;-webkit-text-stroke:0.480px #454646;">Yes</div>
<div class="a" style="left:77.80px;top:103.16px;font-size:13.000px;transform:scale(0.5);transform-origin:0 0;color:#454646;-webkit-text-stroke:0.480px #454646;">No</div>
<div class="a" style="left:51.8px;top:69px;width:78px;height:47.9px;border:2.1px solid #d7202e"></div>
<div class="a" style="left:243.2px;top:176.3px;width:26.9px;height:270px;border:2px solid #d7202e"></div>
</body></html>
